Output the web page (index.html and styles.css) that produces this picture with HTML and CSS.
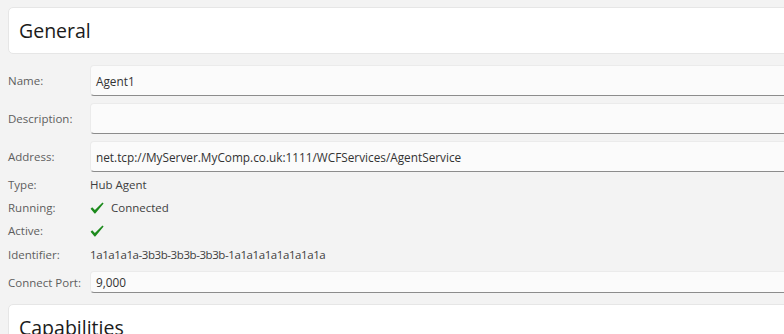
FILE: index.html
```html
<!DOCTYPE html>
<html>
<head>
<meta charset="utf-8">
<link rel="stylesheet" href="styles.css">
</head>
<body>
<div class="page">
  <section class="card"><h2 class="card-title">General</h2></section>
  <div class="form">
    <div class="row box-row">
      <span class="label">Name:</span>
      <div class="textbox">Agent1</div>
    </div>
    <div class="row box-row">
      <span class="label">Description:</span>
      <div class="textbox"></div>
    </div>
    <div class="row box-row">
      <span class="label">Address:</span>
      <div class="textbox">net.tcp://MyServer.MyComp.co.uk:1111/WCFServices/AgentService</div>
    </div>
    <div class="row text-row">
      <span class="label">Type:</span>
      <span class="value">Hub Agent</span>
    </div>
    <div class="row text-row">
      <span class="label">Running:</span>
      <span class="value"><svg class="check" viewBox="0 0 14 12" width="14" height="12"><path d="M0.6 6.8 L2.2 5.2 L4.9 8.1 L12.5 0.4 L13.6 1.4 L5.3 11.6 L4.5 11.6 Z" fill="#1c8a1c"/></svg>Connected</span>
    </div>
    <div class="row text-row">
      <span class="label">Active:</span>
      <span class="value"><svg class="check" viewBox="0 0 14 12" width="14" height="12"><path d="M0.6 6.8 L2.2 5.2 L4.9 8.1 L12.5 0.4 L13.6 1.4 L5.3 11.6 L4.5 11.6 Z" fill="#1c8a1c"/></svg></span>
    </div>
    <div class="row text-row id-row">
      <span class="label">Identifier:</span>
      <span class="value ident">1a1a1a1a-3b3b-3b3b-3b3b-1a1a1a1a1a1a1a1a</span>
    </div>
    <div class="row small-box-row">
      <span class="label">Connect Port:</span>
      <div class="textbox small">9,000</div>
    </div>
  </div>
  <section class="card"><h2 class="card-title">Capabilities</h2></section>
</div>
</body>
</html>
```
FILE: styles.css
```css
html, body {
  margin: 0;
  padding: 0;
  background: #f3f3f3;
  overflow: hidden;
  font-family: "Open Sans", "Noto Sans", sans-serif;
}
.page {
  width: 830px;
  padding: 7px 0 0 8px;
  display: flex;
  flex-direction: column;
}
.card {
  background: #ffffff;
  border: 1px solid #e6e6e6;
  border-radius: 5px;
  height: 45px;
  display: flex;
  align-items: center;
  padding-left: 10px;
}
.card-title {
  margin: 0;
  font-weight: 400;
  font-size: 19.5px;
  color: #1b1b1b;
}
.form {
  display: flex;
  flex-direction: column;
  margin: 11px 0 11px 0;
}
.row {
  display: grid;
  grid-template-columns: 82px 1fr;
  align-items: center;
}
.box-row { height: 31px; margin-bottom: 7px; }
.box-row:nth-child(3) { margin-bottom: 1px; }
.text-row { height: 23px; }
.id-row { height: 25px; }
.small-box-row { height: 22px; margin-top: 4px; }
.label {
  font-size: 11.5px;
  color: #5e5e5e;
  white-space: nowrap;
}
.value {
  font-size: 11.5px;
  color: #3e3e3e;
  display: flex;
  align-items: center;
  gap: 7px;
}
.ident { letter-spacing: -0.42px; }
.textbox {
  height: 100%;
  box-sizing: border-box;
  background: #fbfbfb;
  border: 1px solid #ebebeb;
  border-bottom: 1px solid #8c8c8c;
  border-radius: 4px;
  padding: 0 5px;
  display: flex;
  align-items: center;
  font-size: 11.8px;
  color: #333333;
  white-space: nowrap;
}
.check { flex: none; }
```
